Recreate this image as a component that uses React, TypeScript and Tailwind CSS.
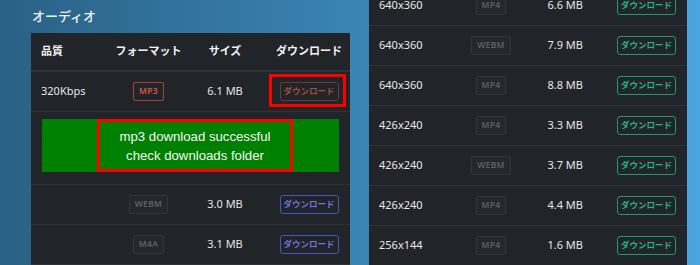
import React from 'react';

type Tone = 'red' | 'gray';

const font = { fontFamily: '"Noto Sans", "Noto Sans CJK JP", sans-serif' };

function Badge({ label, tone }: { label: string; tone: Tone }) {
  const cls =
    tone === 'red'
      ? 'border-[#a3452f] text-[#cf5a3e]'
      : 'border-[#33363c] bg-[#24272c] text-[#5d6272]';
  return (
    <span className={`inline-flex items-center justify-center h-[19px] px-[5px] rounded-[2px] border text-[8.5px] font-semibold tracking-[0.3px] ${cls}`}>
      {label}
    </span>
  );
}

function DlButton({ tone }: { tone: 'red' | 'blue' | 'green' }) {
  const cls =
    tone === 'red'
      ? 'border-[#6e3a30] text-[#a44f3b]'
      : tone === 'blue'
      ? 'border-[#4b55bb] text-[#6b74dc]'
      : 'border-[#1d9a6b] text-[#27b57e]';
  return (
    <span className={`inline-flex items-center justify-center w-[59px] h-[19px] rounded-[3px] border text-[8.5px] font-bold ${cls}`}>
      ダウンロード
    </span>
  );
}

const videoRows = [
  { res: '640x360', fmt: 'MP4', size: '6.6 MB' },
  { res: '640x360', fmt: 'WEBM', size: '7.9 MB' },
  { res: '640x360', fmt: 'MP4', size: '8.8 MB' },
  { res: '426x240', fmt: 'MP4', size: '3.3 MB' },
  { res: '426x240', fmt: 'WEBM', size: '3.7 MB' },
  { res: '426x240', fmt: 'MP4', size: '4.4 MB' },
  { res: '256x144', fmt: 'MP4', size: '1.6 MB' },
];

function AudioRow({ quality, fmt, size, children }: { quality: string; fmt: React.ReactNode; size: string; children: React.ReactNode }) {
  return (
    <div className="flex items-center h-[40px] border-b border-[#2f3237] text-[11px] text-[#e8e8e8]">
      <div className="w-[84px] pl-[10px]">{quality}</div>
      <div className="w-[67px] flex justify-center">{fmt}</div>
      <div className="w-[86px] flex justify-center">{size}</div>
      <div className="w-[82px] flex justify-center">{children}</div>
    </div>
  );
}

export default function App() {
  return (
    <div
      className="w-[700px] h-[265px] overflow-hidden flex bg-gradient-to-r from-[#2a6185] via-[#3a83b3] to-[#4ba4dc]"
      style={font}
    >
      {/* オーディオ */}
      <div className="pl-[31px] w-[350px] shrink-0 flex flex-col">
        <div className="h-[33px] flex items-center pl-px pt-[1px] text-[13px] font-medium text-[#eef3f6]">オーディオ</div>
        <div className="w-[319px] flex-1 bg-[#212428]">
          <div className="flex items-center h-[39px] border-b-2 border-[#2f3237] text-[11px] font-bold text-[#f2f2f2]">
            <div className="w-[84px] pl-[10px]">品質</div>
            <div className="w-[67px] flex justify-center">フォーマット</div>
            <div className="w-[86px] flex justify-center">サイズ</div>
            <div className="w-[82px] flex justify-center">ダウンロード</div>
          </div>
          <AudioRow quality="320Kbps" fmt={<Badge label="MP3" tone="red" />} size="6.1 MB">
            <span className="relative inline-flex">
              <DlButton tone="red" />
              <span className="absolute -left-[11px] -top-[8px] w-[77px] h-[33px] border-[3px] border-[#ff0000]" />
            </span>
          </AudioRow>
          <div className="h-[73px] border-b border-[#2f3237] pt-[8px] px-[11px]">
            <div className="h-[53px] bg-[#008000] pl-[55px]">
              <div
                className="-mt-px w-[196px] h-[53px] border-[3px] border-[#ff0000] flex flex-col items-center justify-center text-[13.2px] leading-[19px] text-[#f4f8f4]"
                style={{ fontFamily: '"Liberation Sans", Arial, sans-serif' }}
              >
                <span>mp3 download successful</span>
                <span>check downloads folder</span>
              </div>
            </div>
          </div>
          <AudioRow quality="" fmt={<Badge label="WEBM" tone="gray" />} size="3.0 MB">
            <DlButton tone="blue" />
          </AudioRow>
          <AudioRow quality="" fmt={<Badge label="M4A" tone="gray" />} size="3.1 MB">
            <DlButton tone="blue" />
          </AudioRow>
        </div>
      </div>

      {/* ビデオ */}
      <div className="ml-[19px] w-[318px] shrink-0 -mt-[14px] h-[281px] bg-[#212428]">
        {videoRows.map((r, i) => (
          <div key={i} className="flex items-center h-[40px] border-b border-[#2f3237] text-[11px] text-[#e8e8e8]">
            <div className="w-[71px] pl-[10px]">{r.res}</div>
            <div className="w-[102px] flex justify-center">
              <Badge label={r.fmt} tone="gray" />
            </div>
            <div className="w-[41px] text-right whitespace-nowrap">{r.size}</div>
            <div className="flex-1 pl-[34px]">
              <DlButton tone="green" />
            </div>
          </div>
        ))}
      </div>
    </div>
  );
}
